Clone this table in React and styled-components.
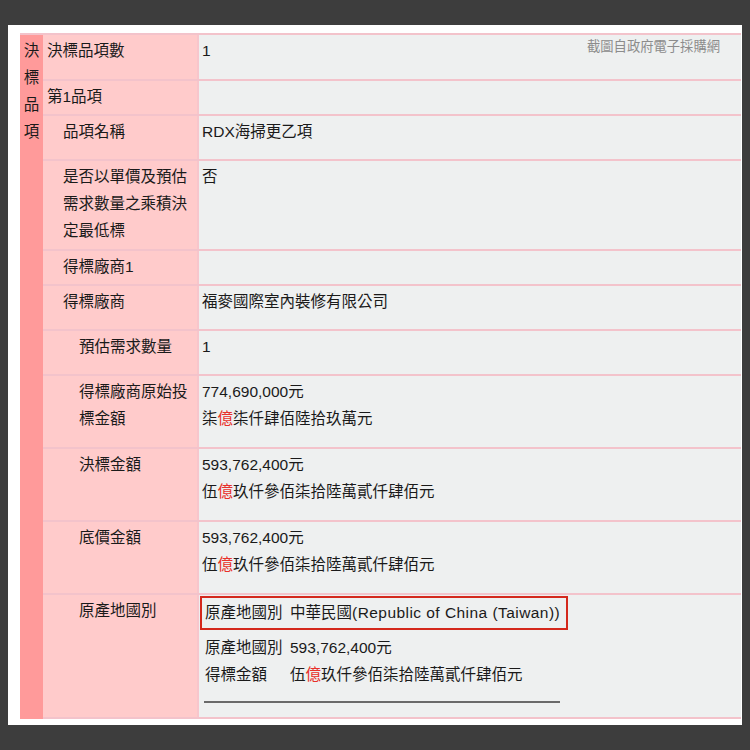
import React from "react";
import styled, { createGlobalStyle } from "styled-components";

const GlobalStyle = createGlobalStyle`
  html, body {
    margin: 0;
    padding: 0;
    background: #3d3d3d;
  }
  body {
    font-family: "Liberation Sans", "Noto Sans CJK TC", sans-serif;
    color: #1a1a1a;
  }
`;

const Page = styled.div`
  width: 750px;
  height: 750px;
  padding: 25px 8px 0 8px;
  box-sizing: border-box;
`;

const Panel = styled.div`
  position: relative;
  background: #ffffff;
  width: 734px;
  height: 700px;
  padding: 8px 1px 0 12px;
  box-sizing: border-box;
`;

const Watermark = styled.div`
  position: absolute;
  top: 11px;
  right: 22px;
  font-size: 13.3px;
  color: #8c8c8c;
`;

const Table = styled.div`
  display: flex;
  border-top: 2px solid #f3c3cb;
  font-size: 15.5px;
  line-height: 27px;
`;

const SideHeader = styled.div`
  width: 23px;
  flex: none;
  background: #ff9a9a;
  padding-top: 2px;
  text-align: center;
  display: flex;
  flex-direction: column;
`;

const Body = styled.div`
  flex: 1;
  display: flex;
  flex-direction: column;
`;

const Row = styled.div`
  display: grid;
  grid-template-columns: 154px 1fr;
  height: ${(p) => p.$h}px;
  box-sizing: border-box;
  border-bottom: 2px solid #f3c3cb;
`;

const Label = styled.div`
  background: #ffcbcb;
  padding: 2px 4px 0 ${(p) => 4 + p.$level * 16}px;
`;

const Value = styled.div`
  background: #eef0f0;
  border-left: 2px solid #f7c6cc;
  padding: 2px 4px 0 3px;
`;

const Red = styled.span`
  color: #e8302a;
`;

const OriginBox = styled.div`
  display: inline-grid;
  grid-template-columns: 85px auto;
  margin: -1px 0 4px -2px;
  padding: 1px 6px 2px 3px;
  border: 2px solid #d4281c;
`;

const Latin = styled.span`
  letter-spacing: 0.45px;
`;

const OriginLine = styled.div`
  display: grid;
  grid-template-columns: 85px auto;
  padding-left: 3px;
`;

const Rule = styled.div`
  width: 356px;
  height: 2px;
  background: #6a6a6a;
  margin: 13px 0 0 2px;
`;

function Amount({ num, words }) {
  const [head, tail] = words.split("億");
  return (
    <>
      <div>{num}</div>
      <div>
        {head}
        <Red>億</Red>
        {tail}
      </div>
    </>
  );
}

export default function App() {
  return (
    <Page>
      <GlobalStyle />
      <Panel>
        <Watermark>截圖自政府電子採購網</Watermark>
        <Table>
          <SideHeader>
            <span>決</span>
            <span>標</span>
            <span>品</span>
            <span>項</span>
          </SideHeader>
          <Body>
            <Row $h={46}>
              <Label $level={0}>決標品項數</Label>
              <Value>1</Value>
            </Row>
            <Row $h={35}>
              <Label $level={0}>第1品項</Label>
              <Value />
            </Row>
            <Row $h={45}>
              <Label $level={1}>品項名稱</Label>
              <Value>RDX海掃更乙項</Value>
            </Row>
            <Row $h={90}>
              <Label $level={1}>是否以單價及預估需求數量之乘積決定最低標</Label>
              <Value>否</Value>
            </Row>
            <Row $h={35}>
              <Label $level={1}>得標廠商1</Label>
              <Value />
            </Row>
            <Row $h={45}>
              <Label $level={1}>得標廠商</Label>
              <Value>福麥國際室內裝修有限公司</Value>
            </Row>
            <Row $h={45}>
              <Label $level={2}>預估需求數量</Label>
              <Value>1</Value>
            </Row>
            <Row $h={73}>
              <Label $level={2}>得標廠商原始投標金額</Label>
              <Value>
                <Amount num="774,690,000元" words="柒億柒仟肆佰陸拾玖萬元" />
              </Value>
            </Row>
            <Row $h={73}>
              <Label $level={2}>決標金額</Label>
              <Value>
                <Amount num="593,762,400元" words="伍億玖仟參佰柒拾陸萬貳仟肆佰元" />
              </Value>
            </Row>
            <Row $h={73}>
              <Label $level={2}>底價金額</Label>
              <Value>
                <Amount num="593,762,400元" words="伍億玖仟參佰柒拾陸萬貳仟肆佰元" />
              </Value>
            </Row>
            <Row $h={124}>
              <Label $level={2}>原產地國別</Label>
              <Value>
                <OriginBox>
                  <span>原產地國別</span>
                  <span>
                    中華民國<Latin>(Republic of China (Taiwan))</Latin>
                  </span>
                </OriginBox>
                <OriginLine>
                  <span>原產地國別</span>
                  <span>593,762,400元</span>
                </OriginLine>
                <OriginLine>
                  <span>得標金額</span>
                  <span>
                    伍<Red>億</Red>玖仟參佰柒拾陸萬貳仟肆佰元
                  </span>
                </OriginLine>
                <Rule />
              </Value>
            </Row>
          </Body>
        </Table>
      </Panel>
    </Page>
  );
}
